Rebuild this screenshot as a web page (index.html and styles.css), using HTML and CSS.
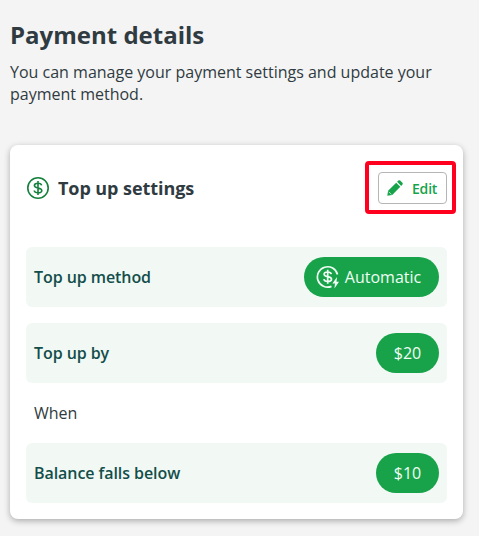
FILE: index.html
```html
<!DOCTYPE html>
<html lang="en">
<head>
    <meta charset="UTF-8">
    <title>Payment details</title>
    <link rel="stylesheet" href="styles.css">
</head>
<body>
    <main class="page">
        <h1>Payment details</h1>
        <p class="intro">You can manage your payment settings and update your payment method.</p>

        <section class="card">
            <div class="card-header">
                <svg class="dollar-icon" viewBox="0 0 24 24" width="24" height="24" fill="none" stroke="currentColor" stroke-width="1.6">
                    <circle cx="12" cy="12" r="10.2"/>
                    <path d="M15.6 9.4C15.3 8 14 7.3 12 7.3c-2.2 0-3.6.8-3.6 2.3 0 3.5 7.4 1.3 7.4 4.9 0 1.5-1.5 2.3-3.8 2.3-2.2 0-3.6-.8-3.8-2.3M12 5v14"/>
                </svg>
                <h2>Top up settings</h2>
                <div class="edit-wrap">
                    <button type="button" class="edit-button">
                        <svg viewBox="0 0 16 16" width="16" height="16" fill="currentColor">
                            <path d="M.3 15.7l.8-4.9 8.1-8.1 4.1 4.1-8.1 8.1zM10.1 1.8L11.4.6q.9-.7 1.8 0l2.2 2.2q.8.9 0 1.8l-1.2 1.3z"/>
                            <path d="M1.6 11.7l2.7 2.7" stroke="#fff" stroke-width=".7"/>
                        </svg>
                        <span>Edit</span>
                    </button>
                    <div class="highlight"></div>
                </div>
            </div>

            <div class="row">
                <span class="label">Top up method</span>
                <span class="pill pill-auto">
                    <svg viewBox="0 0 24 24" width="24" height="24" fill="none" stroke="currentColor" stroke-width="1.7">
                        <path d="M21.5 9.5A10.2 10.2 0 1 0 15.5 21.4"/>
                        <path d="M15.3 9.2C15 7.7 13.7 7 11.7 7c-2.2 0-3.6.8-3.6 2.3 0 3.5 7.4 1.3 7.4 4.9 0 1.5-1.5 2.3-3.8 2.3-2.2 0-3.6-.8-3.8-2.3M11.7 4.8v14"/>
                        <path d="M21 12l-4.6 6.6h2.6l-.6 4.9 4.6-6.8h-2.5z" fill="currentColor" stroke="none"/>
                    </svg>
                    <span>Automatic</span>
                </span>
            </div>
            <div class="row row-by">
                <span class="label">Top up by</span>
                <span class="pill">$20</span>
            </div>
            <div class="when">When</div>
            <div class="row">
                <span class="label">Balance falls below</span>
                <span class="pill">$10</span>
            </div>
        </section>
    </main>
</body>
</html>
```
FILE: styles.css
```css
body {
    margin: 0;
    background-color: #f4f4f4;
    color: #303b41;
    font-family: "Open Sans", sans-serif;
    font-size: 16px;
    line-height: 22px;
}
.page {
    padding: 19px 16px 17px 10px;
}
h1 {
    margin: 0 0 10px;
    font-size: 24px;
    line-height: 32px;
    font-weight: 700;
}
.intro {
    margin: 0 0 40px;
}
.card {
    box-sizing: border-box;
    height: 374px;
    padding: 16px;
    background-color: #fff;
    border-radius: 8px;
    box-shadow: 0 2px 6px rgba(0, 0, 0, 0.3);
}
.card-header {
    display: flex;
    align-items: center;
    height: 54px;
    margin-bottom: 32px;
}
.dollar-icon {
    color: #15803d;
}
h2 {
    margin: 0 auto 0 8px;
    font-size: 18px;
    line-height: 24px;
    font-weight: 700;
    letter-spacing: -0.07px;
}
.edit-wrap {
    position: relative;
}
.edit-button {
    display: flex;
    align-items: center;
    box-sizing: border-box;
    gap: 9px;
    width: 69px;
    height: 32px;
    padding: 0 8px;
    background-color: #fff;
    border: 1px solid #b5b5b5;
    border-radius: 4px;
    color: #16a34a;
    font-family: inherit;
    font-size: 14px;
    font-weight: 600;
    letter-spacing: -0.2px;
}
.highlight {
    position: absolute;
    top: -11px;
    right: -9px;
    bottom: -10px;
    left: -13px;
    border: 4px solid #ff001f;
    border-radius: 4px;
}
.row {
    display: flex;
    align-items: center;
    justify-content: space-between;
    box-sizing: border-box;
    height: 60px;
    padding: 0 8px;
    background-color: #f2f9f5;
    border-radius: 6px;
}
.row-by {
    margin-top: 16px;
}
.label {
    color: #134e4a;
    font-weight: 600;
    letter-spacing: -0.07px;
}
.pill {
    display: flex;
    align-items: center;
    justify-content: center;
    box-sizing: border-box;
    width: 63px;
    height: 40px;
    background-color: #18a34a;
    border-radius: 20px;
    color: #f0fdf4;
}
.pill-auto {
    gap: 5px;
    width: 135px;
    padding-right: 6px;
}
.when {
    height: 60px;
    padding-left: 8px;
    line-height: 60px;
}
```
